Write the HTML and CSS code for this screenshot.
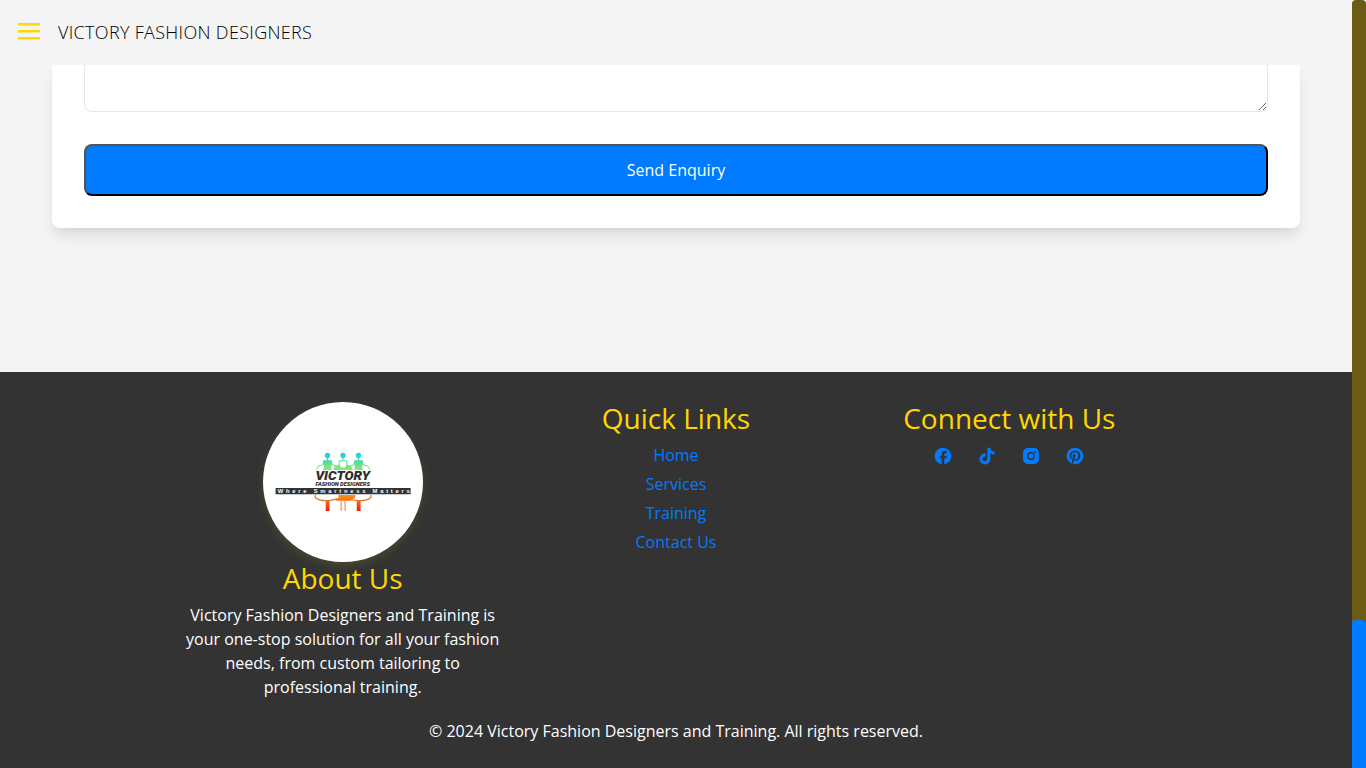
FILE: index.html
```html
<!DOCTYPE html>
<html lang="en">
<head>
<meta charset="utf-8">
<title>Victory Fashion Designers</title>
<link rel="stylesheet" href="styles.css">
</head>
<body>
<div class="page">
  <header class="topbar">
    <svg class="menu-icon" width="22" height="17" viewBox="0 0 22 17" aria-label="Menu"><path fill="#ffd700" d="M0 0h22v2.5H0zM0 7h22v2.5H0zM0 14h22v2.5H0z"/></svg>
    <span class="brand">VICTORY FASHION DESIGNERS</span>
  </header>
  <main class="content">
    <form class="card">
      <textarea class="message" aria-label="Message"></textarea>
      <button class="send" type="button">Send Enquiry</button>
    </form>
  </main>
  <footer class="footer">
    <div class="columns">
      <section class="column">
        <svg class="logo" width="160" height="160" viewBox="0 0 160 160">
          <defs>
            <linearGradient id="cool" gradientUnits="userSpaceOnUse" x1="0" y1="52" x2="0" y2="68"><stop offset="0" stop-color="#22cfdc"/><stop offset=".45" stop-color="#4bdca8"/><stop offset="1" stop-color="#92e668"/></linearGradient>
            <linearGradient id="warm" gradientUnits="userSpaceOnUse" x1="0" y1="93" x2="0" y2="109"><stop offset="0" stop-color="#ff9418"/><stop offset=".5" stop-color="#f55a10"/><stop offset="1" stop-color="#f51b08"/></linearGradient>
          </defs>
          <g fill="url(#cool)">
            <circle cx="64.5" cy="53.5" r="2.7"/><circle cx="80" cy="53.5" r="2.7"/><circle cx="95.5" cy="53.5" r="2.7"/>
            <path d="M63.8 55h1.4v3.2h3.5l.7 3-1.5 3.300 1 3.500h-8.800l1-3.500-1.500-3.300.7-3h3.500zM94.800 55h1.400v3.200h3.500l.7 3-1.500 3.300 1 3.500h-8.800l1-3.500-1.500-3.300.7-3h3.500z"/>
            <path d="M70 68l2-4 4-1.500 2 3h4l2-3 4 1.500 2 4z"/>
          </g>
          <path d="M80 55v3.500M76.200 64v-5.200h7.600V64M60 62.500l-5 1.800-1.800 3.700M69 62.500l4 1.500M100 62.500l5 1.800 1.800 3.700M91 62.500l-4 1.500" fill="none" stroke="url(#cool)" stroke-width="1"/>
          <text class="logo-name" x="52.4" y="78" textLength="54.6" lengthAdjust="spacingAndGlyphs">VICTORY</text>
          <text class="logo-sub" x="52.5" y="83.7" textLength="54.5" lengthAdjust="spacingAndGlyphs">FASHION DESIGNERS</text>
          <path fill="#333" d="M12.600 86h135v6.200h-135z"/>
          <text class="logo-tag" x="14.800" y="91.300" textLength="132">Where Smartness Matters</text>
          <g fill="url(#warm)"><path d="M75.500 93h17l-.8 3.200-5 2.600H74.500l-5-1.400 6-1.400zM62.700 98.800h3.800v10.200h-3.800zM93.700 98.800h3.900v10.200h-3.900z"/></g>
          <path d="M52.200 93v2.500c3 2.600 9 3.400 13 3.100 4-.2 5-1.400 9-1.400M108 93v2.500c-3 2.600-9 3.400-13 3.100-4-.2-5-1-9-1" fill="none" stroke="#df7c2c" stroke-width="1.200"/>
          <path d="M78.200 99v10M82.100 99v10" stroke="#f9a184" stroke-width="1.500"/>
        </svg>
        <h3 class="heading">About Us</h3>
        <p class="about">Victory Fashion Designers and Training is your one-stop solution for all your fashion needs, from custom tailoring to professional training.</p>
      </section>
      <section class="column">
        <h3 class="heading">Quick Links</h3>
        <ul class="links">
          <li><a href="#">Home</a></li>
          <li><a href="#">Services</a></li>
          <li><a href="#">Training</a></li>
          <li><a href="#">Contact Us</a></li>
        </ul>
      </section>
      <section class="column">
        <h3 class="heading">Connect with Us</h3>
        <div class="social">
          <svg width="20" height="20" viewBox="0 0 24 24"><path d="M12.001 2.002c-5.522 0-9.999 4.477-9.999 9.999 0 4.990 3.656 9.126 8.437 9.879v-6.988h-2.540v-2.891h2.540V9.798c0-2.508 1.493-3.891 3.776-3.891 1.094 0 2.240.195 2.240.195v2.459h-1.264c-1.240 0-1.628.772-1.628 1.563v1.875h2.771l-.443 2.891h-2.328v6.988C18.344 21.129 22 16.992 22 12.001c0-5.522-4.477-9.999-9.999-9.999z"/></svg>
          <svg width="20" height="20" viewBox="0 0 24 24"><path d="M20.600 10.200a8.200 8.200 0 0 1-4.500-1.500v6.700A6.600 6.600 0 1 1 10.400 9v3.700a2.900 2.900 0 1 0 2 2.700V2h3.700a4.900 4.900 0 0 0 4.900 4.700v3.500z"/></svg>
          <svg width="20" height="20" viewBox="0 0 24 24"><path fill-rule="evenodd" d="M8 2.500h8A5.500 5.500 0 0 1 21.500 8v8a5.500 5.500 0 0 1-5.500 5.500H8A5.500 5.500 0 0 1 2.500 16V8A5.500 5.500 0 0 1 8 2.500zM12 7.300a4.700 4.700 0 1 0 0 9.400 4.700 4.700 0 0 0 0-9.400zm0 1.700a3 3 0 1 1 0 6 3 3 0 0 1 0-6zm4.900-3a1.100 1.100 0 1 0 0 2.200 1.100 1.100 0 0 0 0-2.200z"/></svg>
          <svg width="20" height="20" viewBox="0 0 24 24"><path d="M12 2a10 10 0 0 0-3.650 19.310c-.09-.79-.17-2.010.03-2.870.18-.78 1.170-4.970 1.170-4.970s-.3-.6-.3-1.480c0-1.390.81-2.430 1.810-2.430.86 0 1.270.64 1.270 1.410 0 .86-.55 2.140-.83 3.330-.24 1 .5 1.810 1.480 1.810 1.780 0 3.140-1.880 3.140-4.580 0-2.390-1.720-4.070-4.180-4.070-2.840 0-4.510 2.130-4.510 4.340 0 .86.33 1.780.74 2.280.08.1.09.19.07.29-.07.31-.24 1-.28 1.130-.04.19-.14.22-.34.14-1.250-.58-2.030-2.410-2.030-3.880 0-3.160 2.290-6.060 6.620-6.060 3.470 0 6.170 2.480 6.170 5.780 0 3.450-2.180 6.230-5.200 6.230-1.010 0-1.970-.53-2.300-1.150l-.62 2.380c-.23.87-.84 1.960-1.250 2.620A10 10 0 1 0 12 2z"/></svg>
        </div>
      </section>
    </div>
    <p class="copyright">© 2024 Victory Fashion Designers and Training. All rights reserved.</p>
  </footer>
</div>
<div class="scroll-track"><div class="scroll-thumb"></div></div>
</body>
</html>
```
FILE: styles.css
```css
* { box-sizing: border-box; }
body { margin: 0; height: 768px; display: flex; overflow: hidden; background: #f4f4f4; font: 16px/24px "Open Sans", sans-serif; color: #333; }
h3, p, ul { margin: 0; padding: 0; font-weight: 400; }
.page { width: 1352px; height: 768px; display: flex; flex-direction: column; }
.topbar { position: relative; z-index: 1; flex: none; height: 65px; background: #f4f4f4; display: flex; align-items: center; padding: 0 18px; gap: 18px; }
.menu-icon { margin-bottom: 3px; }
.brand { font-size: 18px; font-weight: 300; letter-spacing: .32px; color: #000; margin-bottom: 2px; }
.content { flex: none; height: 307px; padding: 0 52px; }
.card { height: 163px; background: #fff; border-radius: 0 0 8px 8px; padding: 0 32px 32px; box-shadow: 0 10px 15px -3px rgba(0, 0, 0, .1), 0 4px 6px -2px rgba(0, 0, 0, .05); display: flex; flex-direction: column; gap: 32px; }
.message { display: block; height: 47px; width: 100%; border: 1px solid #e2e8f0; border-top: 0; border-radius: 0 0 8px 8px; resize: vertical; background: #fff; }
.send { height: 52px; border: 2px outset #000; border-radius: 8px; background: #007bff; color: #fff; font: 16px/24px "Open Sans", sans-serif; }
.footer { height: 396px; background: #333; color: #fff; padding-top: 30px; text-align: center; }
.columns { width: 1000px; height: 317px; margin: 0 auto; display: grid; grid-template-columns: repeat(3, 1fr); }
.logo { display: block; margin: 0 auto; border-radius: 50%; background: #fff; box-shadow: 0 4px 8px rgba(255, 255, 0, .1); }
.logo-name { font: italic 900 12.5px Roboto, sans-serif; fill: #2c2c2c; }
.logo-sub { font: italic 900 5.3px Roboto, sans-serif; fill: #2c2c2c; }
.logo-tag { font: 700 5.8px "Liberation Sans", sans-serif; fill: #fff; }
.heading { font-size: 28px; line-height: 33.6px; color: #ffd700; margin-bottom: 7px; }
.about { line-height: 24px; padding: 0 8px; }
.links { list-style: none; display: flex; flex-direction: column; gap: 5px; }
.links a { color: #007bff; text-decoration: none; }
.social { display: flex; justify-content: center; gap: 24px; padding-top: 3px; fill: #007bff; }
.scroll-track { width: 14px; height: 768px; background: #6c5b12; border-radius: 4px 4px 0 0; display: flex; flex-direction: column; justify-content: flex-end; }
.scroll-thumb { height: 148px; background: #007bff; border-radius: 4px 4px 0 0; }
```
